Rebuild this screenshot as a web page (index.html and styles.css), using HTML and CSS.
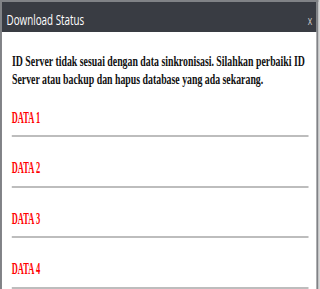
FILE: index.html
```html
<!DOCTYPE html>
<html lang="en">
<head>
  <meta charset="UTF-8" />
  <title>Download Status</title>
  <link rel="stylesheet" href="styles.css">
</head>
<body>
  <div class="screen">
    <div class="dialog">
      <div class="dialog-header">
        <span class="dialog-title">Download Status</span>
        <span class="dialog-close">x</span>
      </div>

      <div class="dialog-body">
        <p class="message">ID Server tidak sesuai dengan data sinkronisasi. Silahkan perbaiki ID Server atau backup dan hapus database yang ada sekarang.</p>

        <div class="data-item">
          <div class="data-label">DATA 1</div>
          <div class="data-line"></div>
        </div>
        <div class="data-item">
          <div class="data-label">DATA 2</div>
          <div class="data-line"></div>
        </div>
        <div class="data-item">
          <div class="data-label">DATA 3</div>
          <div class="data-line"></div>
        </div>
        <div class="data-item">
          <div class="data-label">DATA 4</div>
          <div class="data-line"></div>
        </div>
      </div>
    </div>
  </div>
</body>
</html>
```

FILE: styles.css
```css
/*
  ---------------------
  GLOBAL STYLES
  ---------------------
*/
* {
  margin: 0;
  padding: 0;
  box-sizing: border-box;
}

html,
body {
  overflow: hidden;
}

body {
  background: #d8d8d8;
  font-family: "Liberation Serif", "Times New Roman", serif;
  color: #111;
}

.screen {
  width: 320px;
  height: 289px;
  overflow: hidden;
}

/*
  ---------------------
  DIALOG
  (the whole dialog is drawn narrow, like the screen it copies)
  ---------------------
*/
.dialog {
  width: 485.5px;
  height: 289px;
  border: 3px solid #808286;
  border-top-width: 2px;
  border-bottom: none;
  background: #fff;
  transform: scaleX(0.655);
  transform-origin: 0 0;
}

.dialog-header {
  height: 30px;
  padding: 7px 6px 0 7px;
  background: #393c43;
  display: flex;
  justify-content: space-between;
  align-items: baseline;
}

.dialog-title {
  font-family: "Open Sans", sans-serif;
  font-size: 15px;
  line-height: 20px;
  color: #fff;
}

.dialog-close {
  font-family: "Open Sans", sans-serif;
  font-size: 13px;
  line-height: 20px;
  color: #c8c8c8;
}

/*
  ---------------------
  BODY & DATA ROWS
  ---------------------
*/
.dialog-body {
  padding: 20px 12px 0 15.3px;
}

.message {
  font-size: 15px;
  font-weight: bold;
  line-height: 18px;
  margin-bottom: 20.5px;
}

.data-item + .data-item {
  margin-top: 22.1px;
}

.data-label {
  display: inline-block;
  font-size: 16px;
  font-weight: bold;
  line-height: 18px;
  color: #f00;
  transform: scaleX(0.8);
  transform-origin: 0 0;
  vertical-align: top;
}

.data-line {
  height: 2px;
  margin-top: 8.5px;
  background: #bdbdbd;
}
```
